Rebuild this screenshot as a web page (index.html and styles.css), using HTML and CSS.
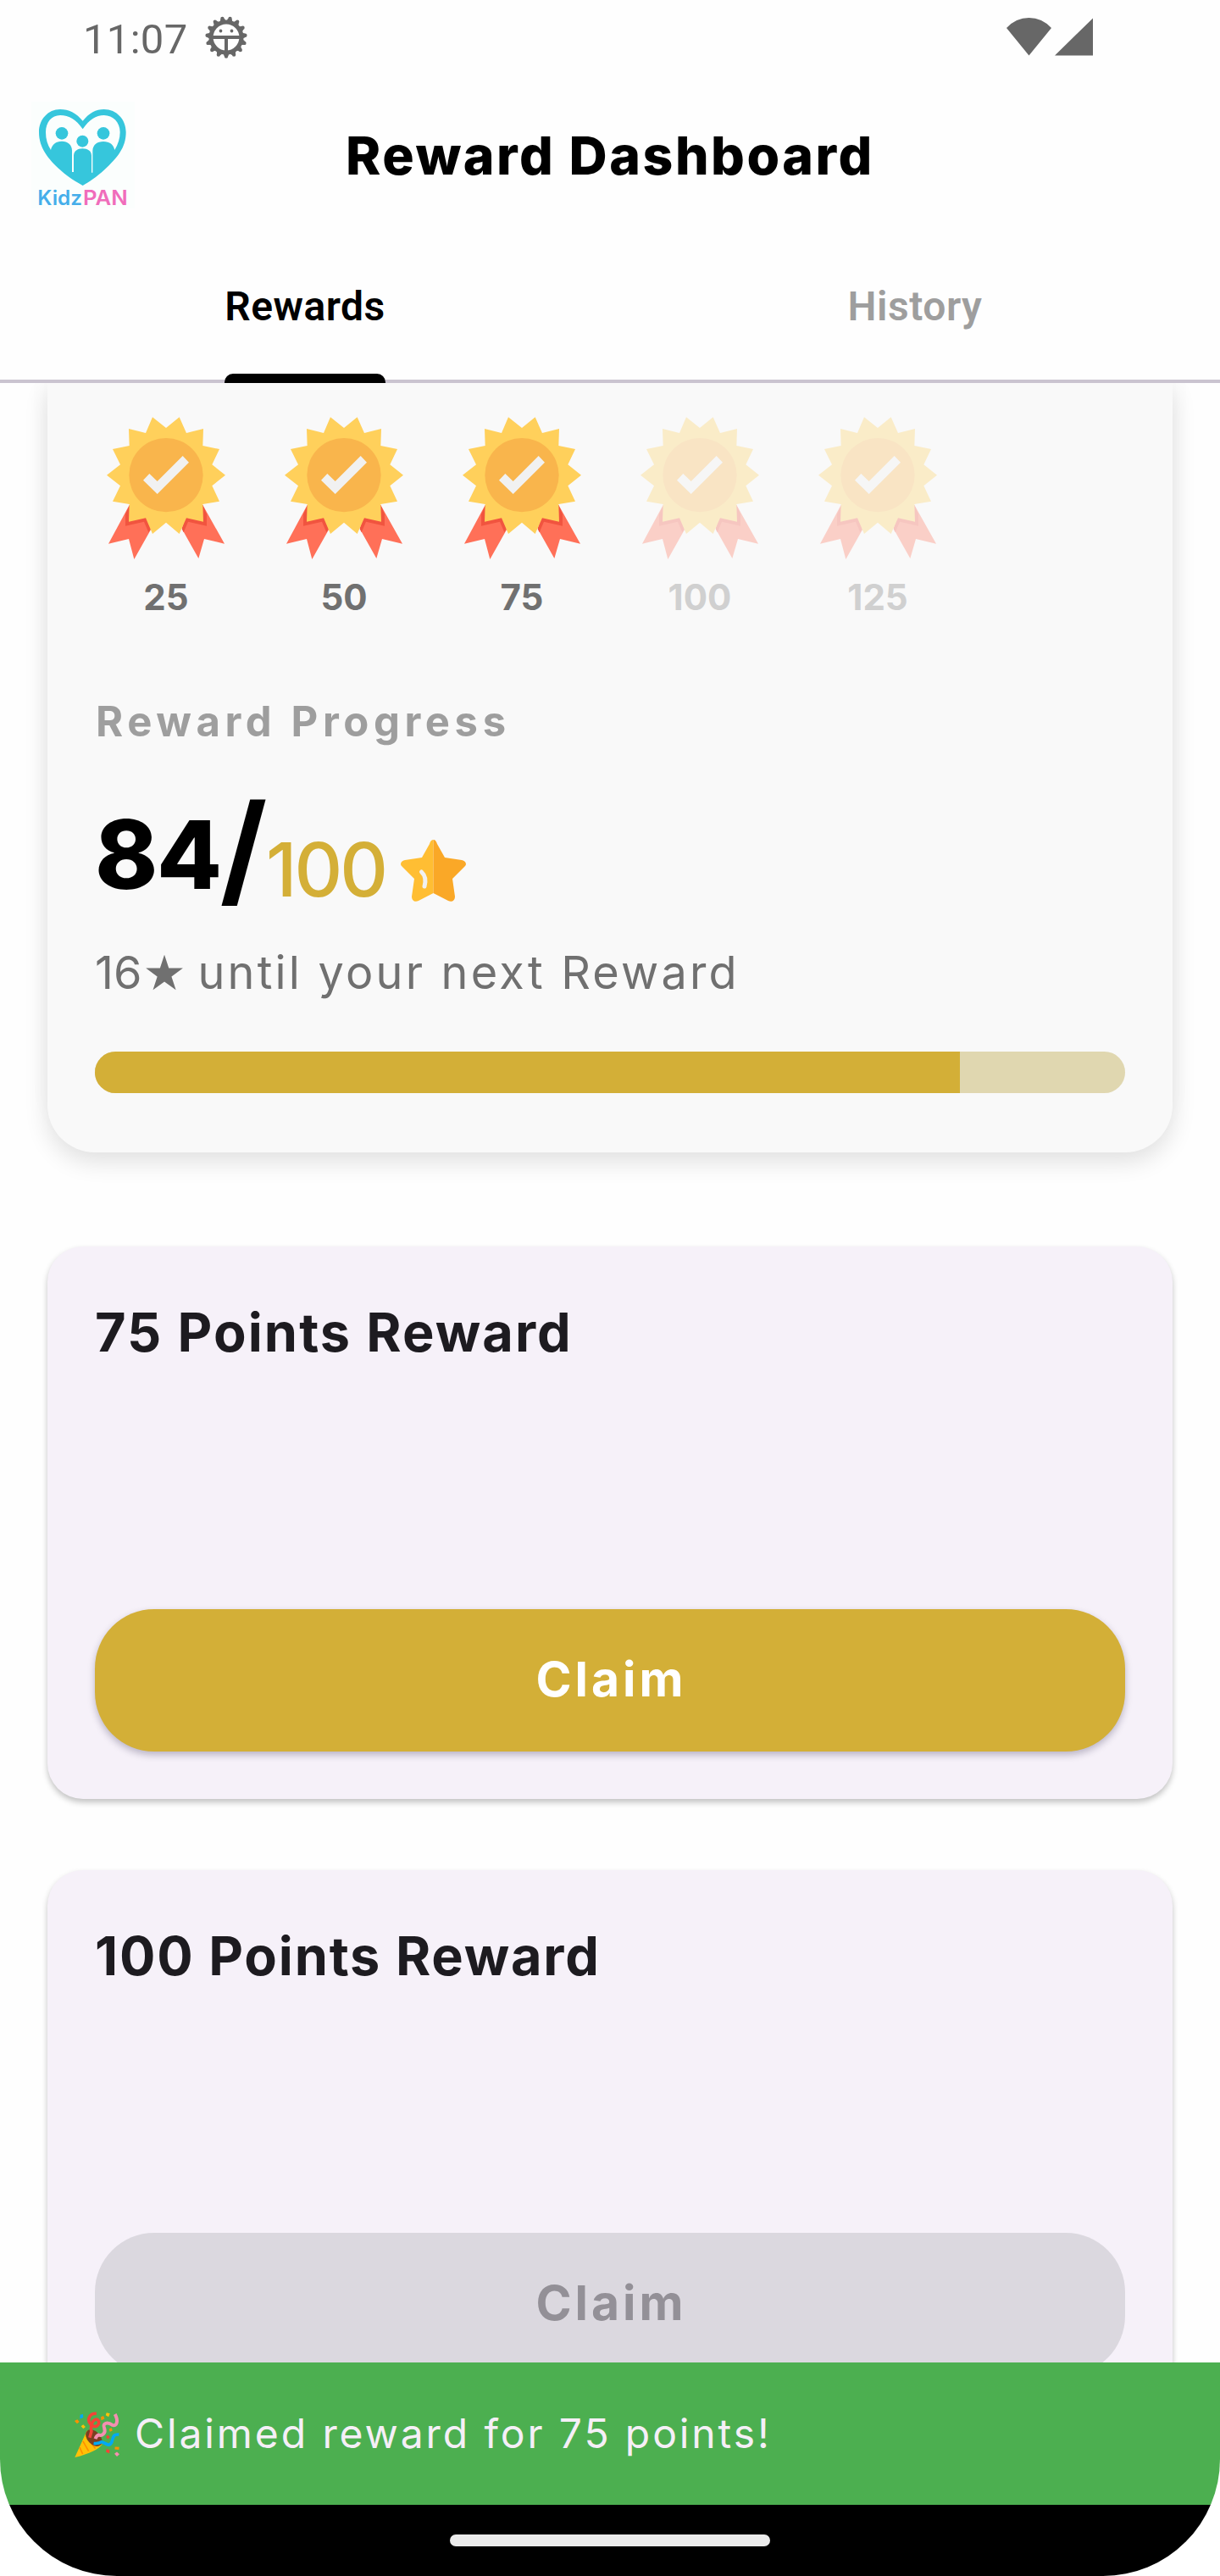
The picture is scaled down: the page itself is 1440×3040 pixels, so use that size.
FILE: index.html
```html
<!DOCTYPE html>
<html lang="en">
<head>
<meta charset="utf-8">
<title>Reward Dashboard</title>
<link rel="stylesheet" href="styles.css">
</head>
<body>
<svg class="defs" aria-hidden="true">
  <symbol id="medal" viewBox="258 156 420 504">
    <path fill="#ff7058" d="M338 468 264 605 336 588 355 660 414 555 396 500ZM598 468 675 605 603 588 583 657 524 552 540 500Z"/>
    <path fill="#f1543f" d="M338 470 324 500V542L390 527 406 565 414 552 396 500ZM598 468 612 500V542L546 527 530 565 524 552 540 500Z"/>
    <path fill="#ffd05b" d="M468 195 515 157 540 213 600 198 598 258 657 270 631 325 678 362 631 400 657 455 598 465 600 527 540 514 515 570 468 530 420 570 396 514 336 527 338 465 279 455 306 400 258 362 306 325 279 270 338 258 336 198 396 213 420 157Z"/>
    <circle cx="468" cy="362" r="131" fill="#f9b54c"/>
    <path fill="#f1f1f1" d="M387 380 409 357 437 384 527 294 549 317 437 429Z"/>
  </symbol>
</svg>
<div class="screen">
  <div class="status">
    <span class="time">11:07</span>
    <svg class="gear" viewBox="-25 -25 50 50" fill="none" stroke="#676767">
      <circle r="18" stroke-width="5.200"/>
      <circle r="20" stroke-width="6" stroke-linecap="round" pathLength="150" stroke-dasharray="0 10" stroke-dashoffset="-7.500"/>
      <circle r="22.500" stroke-width="4.400" stroke-linecap="round" pathLength="150" stroke-dasharray="0 10" stroke-dashoffset="-7.500"/>
      <path d="M-17 0H17M0 0V17" stroke-width="4"/>
      <path d="M-6.500-7.500h0M6.500-7.500h0" stroke-width="3.800" stroke-linecap="round"/>
    </svg>
    <svg class="signals" viewBox="0 0 102 45">
      <path fill="#676767" d="M0 12Q11 0 26.500 0T53 12L26.500 44.500ZM102 .5V44.500H57Z"/>
    </svg>
  </div>
  <header class="appbar">
    <svg class="logo" viewBox="111 357 366 378">
      <path fill="#fbfefd" d="M111 357H477V735H111Z"/>
      <path fill="#36c6dc" d="M293 425C270 397 243 384 213 384C170 384 138 420 138 465C138 520 170 560 215 600C245 627 270 641 293 654C316 641 341 625 370 598C415 556 446 520 446 465C446 420 413 384 368 384C340 384 316 397 293 425Z"/>
      <path fill="#fbfefd" d="M293 454C270 420 245 405 213 405C183 405 162 430 162 465C162 490 168 510 180 528C184 508 198 497 219 497C240 497 255 510 255 530V606H261V548C262 532 274 523 292 523C311 523 324 532 324 548V608H328V530C329 510 344 498 366 498C388 498 402 509 406 528C418 508 425 488 425 465C425 430 400 405 368 405C340 405 316 420 293 454Z"/>
      <g fill="#36c6dc"><circle cx="219" cy="469" r="22"/><circle cx="366" cy="469" r="22"/><circle cx="292" cy="497" r="21"/></g>
      <text class="brand" x="133" y="722" textLength="158" lengthAdjust="spacingAndGlyphs" fill="#45aeea">Kidz</text>
      <text class="brand" x="294" y="722" textLength="158" lengthAdjust="spacingAndGlyphs" fill="#f06dbb">PAN</text>
    </svg>
    <h1 class="title">Reward Dashboard</h1>
  </header>
  <nav class="tabs">
    <div class="tab"><span class="tab-label tab-label--active">Rewards</span></div>
    <div class="tab"><span class="tab-label">History</span></div>
  </nav>
  <main class="scroll">
    <section class="progress-card">
      <div class="badges">
        <div class="badge"><svg class="medal"><use href="#medal"/></svg><span>25</span></div>
        <div class="badge"><svg class="medal"><use href="#medal"/></svg><span>50</span></div>
        <div class="badge"><svg class="medal"><use href="#medal"/></svg><span>75</span></div>
        <div class="badge badge--locked"><svg class="medal"><use href="#medal"/></svg><span>100</span></div>
        <div class="badge badge--locked"><svg class="medal"><use href="#medal"/></svg><span>125</span></div>
      </div>
      <h2 class="heading">Reward Progress</h2>
      <div class="score">
        <span class="points">84</span><span class="slash">/</span><span class="goal">100</span>
        <svg class="star" viewBox="0 0 77 73">
          <path fill="#ffbe33" d="M38.500 0C36 0 35 2 34 5L25 21 5 24C0 25-1 29 1 31L16 46 13 67C13 72 17 74 21 72L38.500 63Z"/>
          <path fill="#faa827" d="M38.500 0C41 0 42 2 43 5L52 21 72 24C77 25 78 29 76 31L61 46 64 67C64 72 60 74 56 72L38.500 63Z"/>
          <path fill="none" stroke="#f1f1f1" stroke-width="5" stroke-linecap="round" d="M24.500 38Q31 44 28 55"/>
        </svg>
      </div>
      <p class="remaining"><span>16</span><span class="glyph-star">★</span><span class="until">until your next Reward</span></p>
      <div class="bar"><div class="bar-fill" style="width:84%"></div></div>
    </section>
    <section class="reward">
      <h3 class="reward-title">75 Points Reward</h3>
      <button class="claim">Claim</button>
    </section>
    <section class="reward">
      <h3 class="reward-title">100 Points Reward</h3>
      <button class="claim claim--disabled" disabled>Claim</button>
    </section>
  </main>
  <div class="snackbar">
    <svg class="popper" viewBox="264 738 160 164">
      <path fill="#ffc107" d="M265 900 308 805Q350 815 362 853Q345 880 265 900Z"/>
      <path stroke="#ff8f00" stroke-width="5" fill="none" d="M282 864 293 888M294 842 314 878M305 824 338 868"/>
      <ellipse cx="333" cy="831" rx="23" ry="35" transform="rotate(-43 333 831)" fill="#7b3f20"/>
      <path fill="none" stroke="#f44336" stroke-width="11" d="M342 744C318 742 306 765 322 783C338 798 358 784 348 768C338 756 318 776 324 808L318 830"/>
      <path fill="none" stroke="#f48fb1" stroke-width="12" d="M408 746C421 770 415 790 399 785C382 773 362 777 370 796C377 814 361 825 350 820Q342 822 338 834"/>
      <path fill="none" stroke="#03a9f4" stroke-width="11" d="M422 819C400 816 402 830 396 847C386 866 372 846 360 845Q350 852 332 850"/>
      <path fill="#ff9100" d="M264 770l10-5 7 8-8 7ZM358 756l9-4 4 11-12 5ZM387 799l9-4 3 10-9 4ZM408 862l15 1-1 10-15-2Z"/>
      <path fill="#ffc107" d="M287 789l8-6 8 8-8 7ZM378 741l12 3-5 12-10-6Z"/>
      <path fill="#03a9f4" d="M284 748l10-2 1 12-12 5Z"/>
      <path fill="#f44336" d="M376 827l7-7 7 8-8 7ZM378 870l11 4-1 12-12-5Z"/>
      <path fill="#f48fb1" d="M406 887l9-7 9 9-9 8Z"/>
    </svg>
    <span class="message">Claimed reward for 75 points!</span>
  </div>
  <div class="navbar"><div class="handle"></div></div>
</div>
</body>
</html>
```
FILE: styles.css
```css
* { box-sizing: border-box; margin: 0; padding: 0; }
body { background: #fff; font-family: Inter, "Open Sans", sans-serif; }
h1, h2, h3, p, span { white-space: nowrap; }
svg { display: block; flex: none; }
.defs { position: absolute; width: 0; height: 0; }

.screen {
  position: relative;
  display: flex;
  flex-direction: column;
  width: 1440px;
  height: 3040px;
  overflow: hidden;
  background: #fefefe;
  border-radius: 0 0 138px 138px;
}

.status { display: flex; height: 93px; padding-left: 98px; color: #676767; }
.time { width: 144px; font: 400 49px/93px Roboto, sans-serif; letter-spacing: .3px; }
.gear { width: 50px; height: 50px; margin-top: 19px; }
.signals { width: 102px; height: 45px; margin: 21px 0 0 896px; }

.appbar { display: grid; grid-template-columns: 122px 1fr 122px; align-items: center; height: 179px; padding: 0 37px; }
.logo { width: 122px; height: 126px; overflow: visible; }
.brand { font: 600 72px/1 Inter, sans-serif; }
.title { font-size: 62.5px; line-height: 80px; font-weight: 800; letter-spacing: 2.5px; text-align: center; color: #000; }

.tabs { display: grid; grid-template-columns: 1fr 1fr; height: 180px; border-bottom: 4px solid #cac4d0; }
.tab { display: flex; justify-content: center; }
.tab-label { position: relative; font: 600 48px/179px Roboto, sans-serif; letter-spacing: .5px; color: #9e9e9e; }
.tab-label--active { color: #000; }
.tab-label--active::after {
  content: "";
  position: absolute;
  left: 0;
  right: 0;
  bottom: -1px;
  height: 11px;
  background: #000;
  border-radius: 10px 10px 0 0;
}

.scroll { height: 2336px; padding: 0 56px; overflow: hidden; }

.progress-card {
  height: 908px;
  padding: 40px 56px 0;
  background: #f9f9f9;
  border-radius: 0 0 56px 56px;
  box-shadow: 0 -20px 28px rgba(0, 0, 0, .03), 0 11px 28px rgba(0, 0, 0, .12);
}
.badges { display: flex; gap: 70px; padding-left: 14px; }
.badge { display: flex; flex-direction: column; align-items: center; gap: 15px; width: 140px; font-size: 42px; line-height: 60px; font-weight: 700; color: #707070; }
.medal { width: 140px; height: 168px; }
.badge--locked { color: #d0d0d0; }
.badge--locked .medal { opacity: .3; }
.heading { margin: 82px 0 0 1px; font-size: 49px; line-height: 70px; font-weight: 700; letter-spacing: 5.6px; color: #9e9e9e; }
.score { display: flex; align-items: flex-start; width: 438px; height: 200px; padding-top: 31px; line-height: 180px; }
.points, .slash { font-size: 112px; font-weight: 800; letter-spacing: -1.5px; color: #000; }
.slash { margin: -7px 0 0 -1px; font-size: 144px; font-weight: 700; }
.goal { margin-top: 18px; font-size: 88px; font-weight: 500; letter-spacing: -3px; color: #d4af37; }
.star { width: 77px; height: 73px; margin: 73px 0 0 auto; }
.remaining { display: flex; margin-top: 21px; font-size: 54px; line-height: 80px; font-weight: 400; color: #707070; }
.glyph-star { width: 51px; font: 57px/80px "DejaVu Sans", sans-serif; text-indent: 1px; }
.until { margin-left: 15px; letter-spacing: 3.2px; }
.bar { height: 49px; margin-top: 53px; overflow: hidden; background: #e0d7b0; border-radius: 25px; }
.bar-fill { height: 100%; background: #d3af37; }

.reward {
  display: flex;
  flex-direction: column;
  justify-content: space-between;
  height: 652px;
  margin-top: 111px;
  padding: 56px;
  background: #f6f1f9;
  border-radius: 42px;
  box-shadow: 0 4px 7px rgba(0, 0, 0, .24);
}
.reward + .reward { margin-top: 84px; }
.reward-title { font-size: 63px; line-height: 90px; font-weight: 700; letter-spacing: 2.1px; color: #1d1b20; }
.reward + .reward .reward-title { letter-spacing: 1.8px; }
.claim {
  height: 168px;
  border: 0;
  border-radius: 70px;
  background: #d3af37;
  color: #fff;
  font: 700 57px/165px Inter, sans-serif;
  letter-spacing: 4px;
  text-indent: 3px;
  padding-bottom: 4px;
  box-shadow: 0 4px 9px rgba(30, 20, 60, .28);
}
.claim--disabled { background: #dbd8df; color: #939097; box-shadow: none; }

.snackbar { display: flex; align-items: center; height: 168px; padding-left: 88px; background: #4caf50; color: #f5eff7; font-size: 48px; }
.popper { width: 53px; height: 55px; margin-top: 3px; }
.message { margin-left: 18px; font-weight: 400; letter-spacing: 2.9px; line-height: 70px; }
.navbar { display: flex; justify-content: center; height: 84px; padding-top: 35px; background: #000; }
.handle { width: 378px; height: 14px; background: #ebebeb; border-radius: 7px; }
```
